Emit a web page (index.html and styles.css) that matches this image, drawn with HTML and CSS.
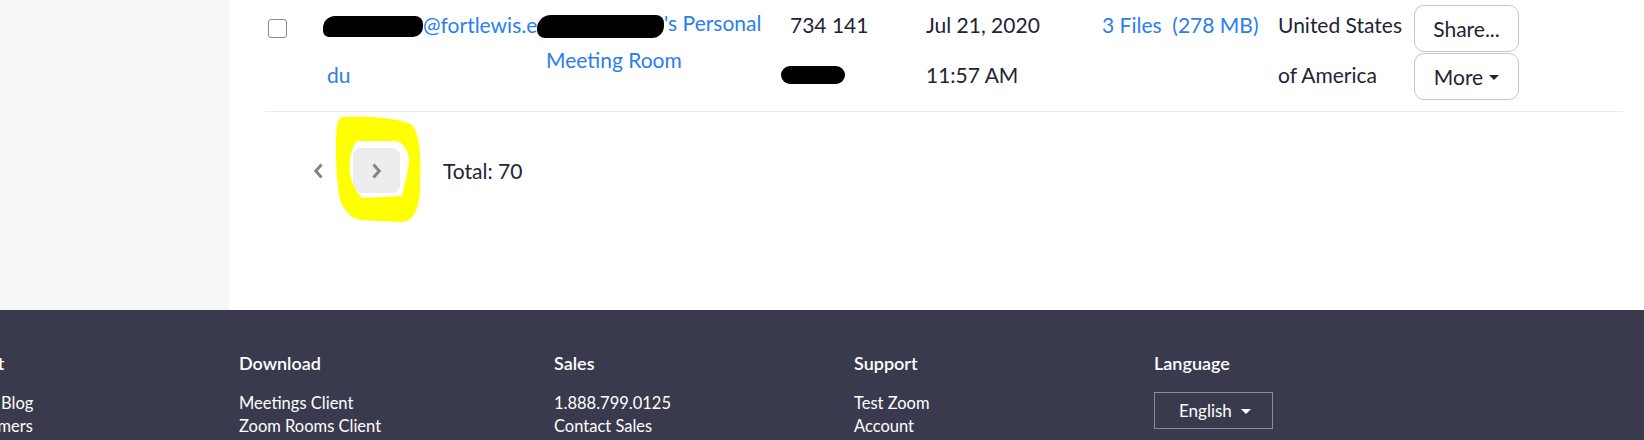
FILE: index.html
```html
<!DOCTYPE html>
<html lang="en">
<head>
<meta charset="utf-8">
<title>Recordings</title>
<link rel="stylesheet" href="styles.css">
</head>
<body>
<div class="page">
  <div class="top">
    <aside class="sidebar"></aside>
    <main class="content">
      <div class="row">
        <div class="cell c-check"><span class="checkbox"></span></div>
        <div class="cell c-email link"><span class="redact r1"></span>@fortlewis.e<br>du</div>
        <div class="cell c-topic link"><span class="redact r2"></span>'s Personal<br>Meeting Room</div>
        <div class="cell c-id">734 141<br><span class="redact r3"></span></div>
        <div class="cell c-date">Jul 21, 2020<br>11:57 AM</div>
        <div class="cell c-files link">3 Files&nbsp;&nbsp;(278 MB)</div>
        <div class="cell c-loc">United States of America</div>
        <div class="cell c-actions">
          <button class="btn">Share...</button>
          <button class="btn">More <span class="caret"></span></button>
        </div>
      </div>
      <div class="pager">
        <span class="pg prev"><svg width="11" height="16" viewBox="0 0 11 16"><polyline points="8.5,1.5 2.8,8 8.5,14.5" fill="none" stroke="#858585" stroke-width="3"/></svg></span>
        <span class="pg next"><svg width="11" height="16" viewBox="0 0 11 16"><polyline points="2.5,1.5 8.2,8 2.5,14.5" fill="none" stroke="#858585" stroke-width="3"/></svg></span>
        <span class="total">Total: 70</span>
      </div>
      <svg class="mark" viewBox="229 0 1415 310" width="1415" height="310">
        <path fill="#ffff00" fill-rule="evenodd" d="M343,117 C362,116 394,117 411,124 C421,134 421,160 420,190 C419,210 413,222 401,222 L360,220 C348,217 341,206 339,196 C336,172 335,142 337,126 C338,120 340,117 343,117 Z M357,141 L397,141 C405,144 410,154 409,163 C407,176 404,187 402,196 L363,198 C355,192 351,182 350,172 C349,160 351,147 357,141 Z"/>
      </svg>
    </main>
  </div>
  <footer class="footer">
    <div class="footer-inner">
      <div class="fcol w1">
        <div class="fhead">About</div>
        <div class="flinks"><div>Zoom Blog</div><div>Customers</div></div>
      </div>
      <div class="fcol w2">
        <div class="fhead">Download</div>
        <div class="flinks"><div>Meetings Client</div><div>Zoom Rooms Client</div></div>
      </div>
      <div class="fcol w3">
        <div class="fhead">Sales</div>
        <div class="flinks"><div>1.888.799.0125</div><div>Contact Sales</div></div>
      </div>
      <div class="fcol w4">
        <div class="fhead">Support</div>
        <div class="flinks"><div>Test Zoom</div><div>Account</div></div>
      </div>
      <div class="fcol">
        <div class="fhead">Language</div>
        <div class="lang-box">English <span class="caret light"></span></div>
      </div>
    </div>
  </footer>
</div>
</body>
</html>
```

FILE: styles.css
```css
* { box-sizing: border-box; margin: 0; padding: 0; }
html, body { width: 1644px; height: 440px; overflow: hidden; }
body { font-family: Lato, "Noto Sans", sans-serif; color: #232333; background: #fff; }

.top { display: flex; height: 310px; }
.sidebar { width: 229px; flex: none; background: #f6f7f9; }
.content { flex: 1; position: relative; padding: 0 21px 0 36px; }

.row {
  display: flex;
  align-items: flex-start;
  height: 112px;
  border-bottom: 1px solid #ececf0;
  font-size: 21px;
  line-height: 50px;
}
.cell { flex: none; }
.link { color: #2b7eef; }
.c-check { width: 62px; padding: 19px 0 0 3px; line-height: 0; }
.checkbox {
  display: inline-block;
  width: 19px; height: 19px;
  border: 1.5px solid #8a8a8a;
  border-radius: 3px;
  background: #fff;
}
.c-email { width: 219px; }
.c-topic { width: 244px; line-height: 37px; padding-top: 4px; }
.c-id { width: 136px; }
.c-date { width: 176px; }
.c-files { width: 176px; }
.c-loc { width: 136px; }
.c-actions { width: 105px; display: flex; flex-direction: column; gap: 1px; padding-top: 5px; }

.redact { display: inline-block; background: #000; }
.r1 { width: 100px; height: 21px; margin-left: -4px; border-radius: 12px 8px 10px 6px; vertical-align: -4px; }
.r2 { width: 127px; height: 23px; margin-left: -9px; border-radius: 14px 8px 12px 8px; vertical-align: -7px; }
.r3 { width: 64px; height: 18px; margin-left: -9px; border-radius: 10px; vertical-align: -1px; }

.btn {
  width: 105px; height: 47px;
  border: 1px solid #c5c5d1;
  border-radius: 10px;
  background: #fff;
  font-family: Lato, "Noto Sans", sans-serif;
  font-size: 21px;
  color: #232333;
  display: flex; align-items: center; justify-content: center;
}
.caret {
  display: inline-block;
  width: 0; height: 0;
  border-left: 5px solid transparent;
  border-right: 5px solid transparent;
  border-top: 5px solid #232333;
  margin-left: 6px;
  margin-top: 2px;
}
.caret.light { border-top-color: #fff; margin-left: 9px; }

.pager { display: flex; align-items: center; margin-top: 36px; padding-left: 30px; font-size: 21px; }
.pg { width: 47px; height: 45px; border-radius: 8px; display: flex; align-items: center; justify-content: center; }
.pg.next { background: #ededed; margin-left: 11px; }
.total { margin-left: 43px; }

.mark { position: absolute; left: 0; top: 0; pointer-events: none; }

.footer { height: 130px; background: #393a4e; color: #fff; overflow: hidden; }
.footer-inner { display: flex; margin-left: -45px; padding-top: 41px; }
.fcol { flex: none; }
.w1 { width: 284px; }
.w2 { width: 315px; }
.w3 { width: 300px; }
.w4 { width: 300px; }
.fhead { font-size: 18px; font-weight: 600; line-height: 24px; }
.flinks { margin-top: 17px; font-size: 16.5px; line-height: 23px; }
.lang-box {
  margin-top: 17px;
  width: 119px; height: 37px;
  border: 1px solid #8b8c99;
  padding-left: 24px;
  display: flex; align-items: center;
  font-size: 17px;
}
```
